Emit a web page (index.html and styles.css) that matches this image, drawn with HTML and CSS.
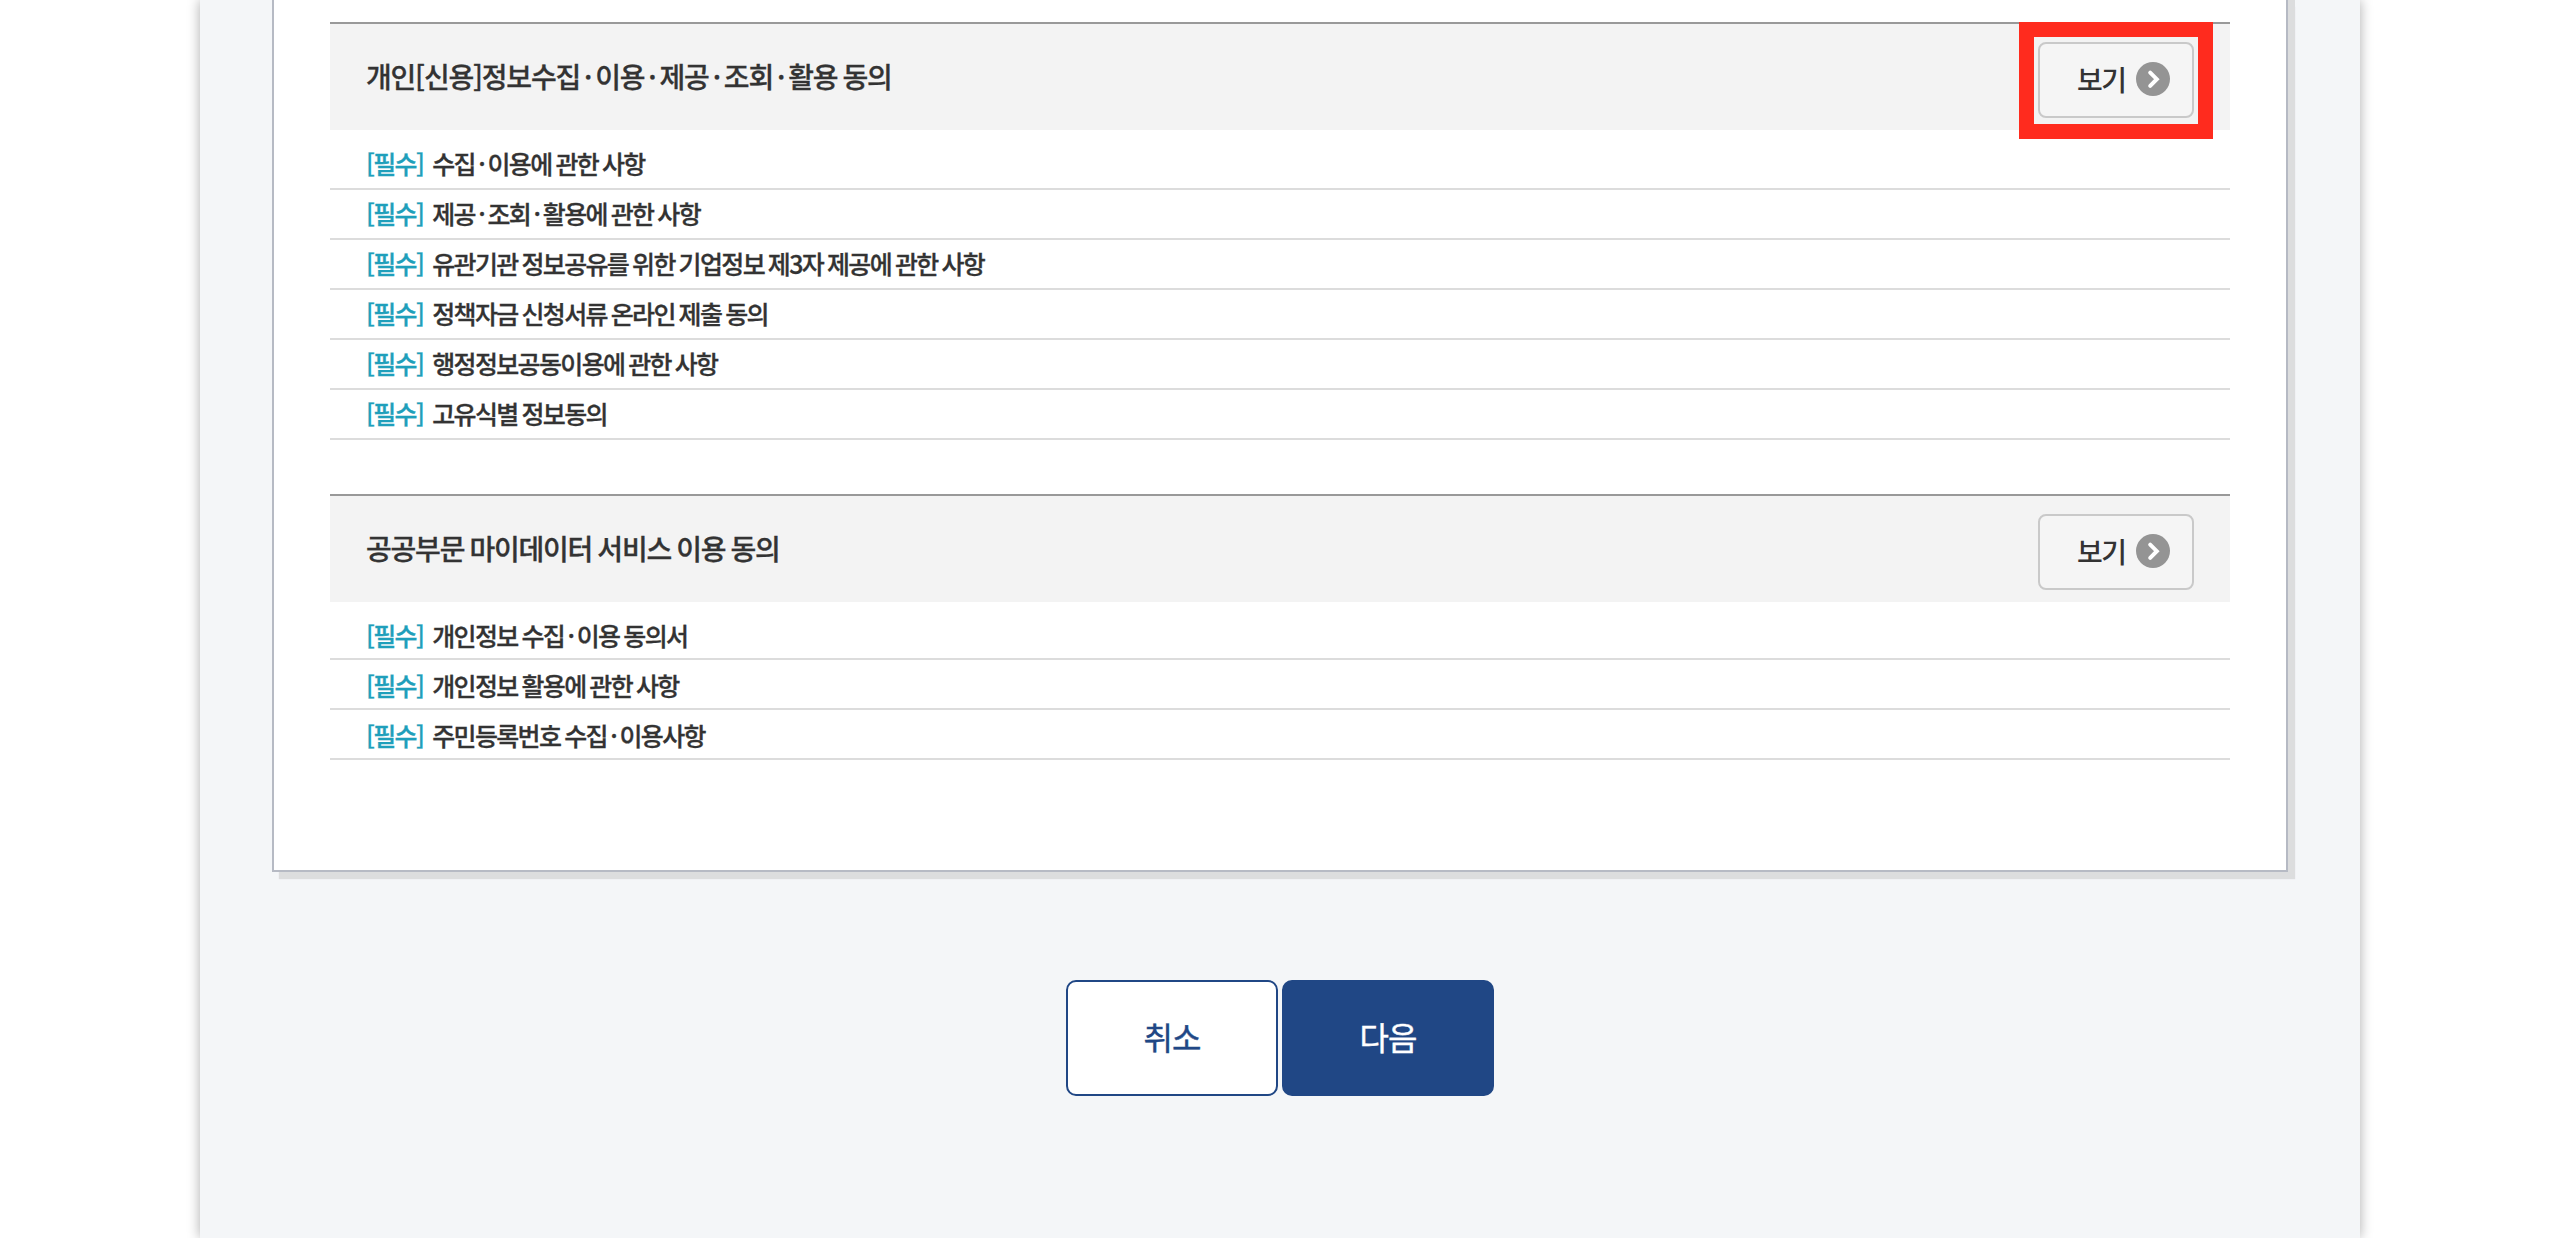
FILE: index.html
```html
<!DOCTYPE html>
<html lang="ko">
<head>
  <meta charset="UTF-8" />
  <meta name="viewport" content="width=device-width, initial-scale=1.0"/>
  <title>이용 동의</title>
  <link rel="stylesheet" href="styles.css">
</head>
<body>
  <div class="container">
    <div class="agree-box">
      <div class="agree">
        <div class="agree-head">
          <h2>개인[신용]정보수집<i>·</i>이용<i>·</i>제공<i>·</i>조회<i>·</i>활용 동의</h2>
          <a class="btn-view focus">보기
            <svg width="34" height="34" viewBox="0 0 34 34"><circle cx="17" cy="17" r="17" fill="#949494"/><path d="M14.2 10.6l6.6 6.6-6.6 6.6" fill="none" stroke="#fff" stroke-width="4" stroke-linecap="round"/></svg>
          </a>
        </div>
        <ul class="agree-list">
          <li><span>[필수]</span>수집<i>·</i>이용에 관한 사항</li>
          <li><span>[필수]</span>제공<i>·</i>조회<i>·</i>활용에 관한 사항</li>
          <li><span>[필수]</span>유관기관 정보공유를 위한 기업정보 제3자 제공에 관한 사항</li>
          <li><span>[필수]</span>정책자금 신청서류 온라인 제출 동의</li>
          <li><span>[필수]</span>행정정보공동이용에 관한 사항</li>
          <li><span>[필수]</span>고유식별 정보동의</li>
        </ul>
      </div>

      <div class="agree">
        <div class="agree-head">
          <h2>공공부문 마이데이터 서비스 이용 동의</h2>
          <a class="btn-view">보기
            <svg width="34" height="34" viewBox="0 0 34 34"><circle cx="17" cy="17" r="17" fill="#949494"/><path d="M14.2 10.6l6.6 6.6-6.6 6.6" fill="none" stroke="#fff" stroke-width="4" stroke-linecap="round"/></svg>
          </a>
        </div>
        <ul class="agree-list short">
          <li><span>[필수]</span>개인정보 수집<i>·</i>이용 동의서</li>
          <li><span>[필수]</span>개인정보 활용에 관한 사항</li>
          <li><span>[필수]</span>주민등록번호 수집<i>·</i>이용사항</li>
        </ul>
      </div>
    </div>

    <div class="btn-area">
      <button type="button" class="btn">취소</button>
      <button type="button" class="btn btn-next">다음</button>
    </div>
  </div>
</body>
</html>
```

FILE: styles.css
```css
* {
  box-sizing: border-box;
}

body {
  font-family: "Noto Sans CJK KR", sans-serif;
  font-weight: 500;
  background-color: #fff;
  color: #333;
  margin: 0;
  overflow: hidden;
}

.container {
  width: 2160px;
  height: 1238px;
  margin: 0 auto;
  padding: 0 72px;
  background-color: #f4f6f8;
  box-shadow: 0 0 12px rgba(0, 0, 0, 0.33);
}

.agree-box {
  height: 872px;
  padding: 22px 56px 0;
  background-color: #fff;
  border: 2px solid #b6bac4;
  border-top: none;
  box-shadow: 7px 0 #dcddde, 7px 7px 1px #dcddde;
}

.agree {
  margin-bottom: 54px;
}

.agree-head {
  display: flex;
  justify-content: space-between;
  align-items: flex-start;
  height: 108px;
  padding: 18px 36px 0;
  background-color: #f3f3f3;
  border-top: 2px solid #999;
}

h2 {
  margin: 0;
  font-size: 28px;
  font-weight: 500;
  line-height: 68px;
  letter-spacing: -1.2px;
  word-spacing: -1.5px;
  -webkit-text-stroke: 0.3px;
}

i {
  padding: 0 4px;
  font-style: normal;
}

.btn-view {
  position: relative;
  display: flex;
  align-items: center;
  gap: 10px;
  width: 156px;
  height: 76px;
  padding: 0 0 2px 37px;
  border: 2px solid #c9c9c9;
  border-radius: 8px;
  background-color: #f5f5f5;
  font-size: 28px;
  letter-spacing: -1.4px;
}

/* red highlight around the button */
.focus::after {
  content: "";
  position: absolute;
  box-sizing: border-box;
  top: -22px;
  left: -21px;
  width: 194px;
  height: 117px;
  border: 15px solid #ff2b1e;
}

.agree-list {
  margin: 0;
  padding: 10px 0 0;
  list-style: none;
}

.agree-list li {
  height: 50px;
  padding-left: 36px;
  border-bottom: 2px solid #dcdcdc;
  font-size: 25px;
  line-height: 46px;
  letter-spacing: -1.65px;
  word-spacing: -1.5px;
  -webkit-text-stroke: 0.3px;
}

.agree-list span {
  margin-right: 9px;
  color: #1f9fbb;
}

.agree-list i {
  padding: 0 3.4px;
}

.agree-list.short {
  padding-top: 8px;
}

.agree-list.short li {
  line-height: 50px;
}

.btn-area {
  display: flex;
  justify-content: center;
  gap: 4px;
  margin-top: 108px;
}

.btn {
  width: 212px;
  height: 116px;
  padding: 0 0 5px;
  border: 2px solid #204785;
  border-radius: 10px;
  background-color: #fff;
  color: #204785;
  font-family: inherit;
  font-size: 32px;
  font-weight: 400;
  letter-spacing: -1px;
  -webkit-text-stroke: 0.4px;
}

.btn-next {
  background-color: #204785;
  color: #fff;
}
```
